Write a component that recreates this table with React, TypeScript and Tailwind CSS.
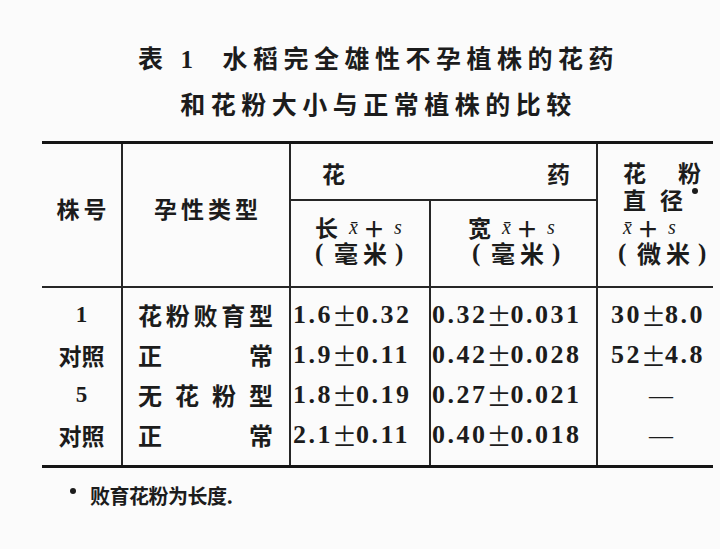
import React from 'react';

const serif = "font-['Liberation_Serif','Noto_Sans_CJK_SC',serif]";
const line = 'border-[#262626]';

const rows = [
  { id: '1', type: ['花', '粉', '败', '育', '型'], len: ['1.6', '0.32'], wid: ['0.32', '0.031'], pollen: ['30', '8.0'] },
  { id: '对照', type: ['正', '常'], len: ['1.9', '0.11'], wid: ['0.42', '0.028'], pollen: ['52', '4.8'] },
  { id: '5', type: ['无', '花', '粉', '型'], len: ['1.8', '0.19'], wid: ['0.27', '0.021'], pollen: null },
  { id: '对照', type: ['正', '常'], len: ['2.1', '0.11'], wid: ['0.40', '0.018'], pollen: null },
];

// x̄ + s, typeset loosely like the scan
function Stat() {
  return (
    <span className="inline-flex items-center leading-none">
      <span className={`${serif} italic font-normal text-[20px]`}>x̄</span>
      <span className="font-['Noto_Sans_CJK_SC',sans-serif] font-bold text-[22px] ml-[5px] mr-[9px]">＋</span>
      <span className={`${serif} italic font-normal text-[20px]`}>s</span>
    </span>
  );
}

function Unit({ a, b }: { a: string; b: string }) {
  return (
    <div className="flex items-center text-[24px] font-bold leading-[26px]">
      <span className={`${serif} font-bold text-[25px] w-[10px]`}>(</span>
      <span className="ml-[9px]">{a}</span>
      <span className="ml-[5px]">{b}</span>
      <span className={`${serif} font-bold text-[25px] ml-[8px]`}>)</span>
    </div>
  );
}

function Val({ v }: { v: string[] }) {
  return (
    <div className="flex items-center">
      <span>{v[0]}</span>
      <span className="font-['Noto_Sans_CJK_SC',sans-serif] font-normal text-[25px] tracking-normal -mx-[1px]">±</span>
      <span>{v[1]}</span>
    </div>
  );
}

export default function App() {
  return (
    <div className="w-[720px] h-[549px] bg-[#fbfbfb] text-[#1c1c1c] font-['Noto_Sans_CJK_SC',sans-serif] overflow-hidden">
      <div className="pt-[35px] pl-[42px] w-[713px]">
        {/* title */}
        <div className="text-center font-bold text-[25px] leading-[45px] tracking-[5.5px] pl-[2px]">
          <div>
            <span>表</span>
            <span className={`${serif} ml-[12px] mr-[24px]`}>1</span>
            <span>水稻完全雄性不孕植株的花药</span>
          </div>
          <div className="-mt-[1px]">和花粉大小与正常植株的比较</div>
        </div>

        {/* table */}
        <div className="mt-[15px] border-t-[3px] border-b-[3px] border-[#151515] grid grid-cols-[81px_168px_140px_165px_117px] grid-rows-[57px_87px_177px]">
          <div className={`row-span-2 border-r-2 border-b-2 ${line} flex items-center justify-center pb-[14px] pl-[4px] text-[23px] font-bold tracking-[4px]`}>
            株号
          </div>
          <div className={`row-span-2 border-r-2 border-b-2 ${line} flex items-center justify-center pb-[14px] pl-[4px] text-[23px] font-bold tracking-[4px]`}>
            孕性类型
          </div>
          <div className={`col-span-2 border-b-2 ${line} flex items-center justify-between pl-[31px] pr-[26px] pt-[4px] text-[23px] font-bold`}>
            <span>花</span>
            <span>药</span>
          </div>
          <div className={`row-span-2 border-l-2 border-b-2 ${line} pl-[25px] pt-[15px] text-[23px] font-bold leading-[27px]`}>
            <div className="flex w-[78px] justify-between">
              <span>花</span>
              <span>粉</span>
            </div>
            <div className="flex items-start">
              <span>直</span>
              <span className="ml-[14px]">径</span>
              <span className="ml-[9px] mt-[2px] w-[6px] h-[6px] rounded-full bg-[#1c1c1c]" />
            </div>
            <div className="h-[27px] flex items-center">
              <Stat />
            </div>
            <div className="-ml-[5px]">
              <Unit a="微" b="米" />
            </div>
          </div>
          <div className={`border-r-2 border-b-2 ${line} flex flex-col items-start justify-center pl-[24px] pb-[8px] text-[23px] font-bold leading-[26px]`}>
            <div className="flex items-center h-[26px]">
              <span className="mr-[11px]">长</span>
              <Stat />
            </div>
            <Unit a="毫" b="米" />
          </div>
          <div className={`border-b-2 ${line} flex flex-col items-start justify-center pl-[37px] pb-[8px] text-[23px] font-bold leading-[26px]`}>
            <div className="flex items-center h-[26px]">
              <span className="mr-[11px]">宽</span>
              <Stat />
            </div>
            <div className="ml-[4px]">
              <Unit a="毫" b="米" />
            </div>
          </div>

          {/* body */}
          <div className={`border-r-2 ${line} pt-[7px] text-[23px] font-bold leading-[40px] text-center`}>
            {rows.map((r, i) => (
              <div key={i} className={/\d/.test(r.id) ? serif : ''}>
                {r.id}
              </div>
            ))}
          </div>
          <div className={`border-r-2 ${line} pt-[7px] pl-[15px] pr-[16px] text-[24px] font-bold leading-[40px]`}>
            {rows.map((r, i) => (
              <div key={i} className="flex justify-between">
                {r.type.map((c, j) => (
                  <span key={j}>{c}</span>
                ))}
              </div>
            ))}
          </div>
          <div className={`${serif} border-r-2 ${line} pt-[7px] pl-[2px] text-[26px] font-bold leading-[40px] tracking-[2.5px]`}>
            {rows.map((r, i) => (
              <Val key={i} v={r.len} />
            ))}
          </div>
          <div className={`${serif} pt-[7px] pl-[1px] text-[26px] font-bold leading-[40px] tracking-[2.5px]`}>
            {rows.map((r, i) => (
              <Val key={i} v={r.wid} />
            ))}
          </div>
          <div className={`${serif} border-l-2 ${line} pt-[7px] pl-[13px] text-[26px] font-bold leading-[40px] tracking-[2.5px]`}>
            {rows.map((r, i) =>
              r.pollen ? (
                <Val key={i} v={r.pollen} />
              ) : (
                <div key={i} className="h-[40px] flex items-center pl-[38px]">
                  <span className="text-[24px] font-normal">—</span>
                </div>
              )
            )}
          </div>
        </div>

        {/* footnote */}
        <div className="mt-[14px] ml-[28px] flex items-center gap-[14px] text-[20px] font-bold leading-[28px] tracking-[-0.5px]">
          <span className="w-[6px] h-[6px] -mt-[10px] rounded-full bg-[#1c1c1c]" />
          <span>败育花粉为长度.</span>
        </div>
      </div>
    </div>
  );
}
